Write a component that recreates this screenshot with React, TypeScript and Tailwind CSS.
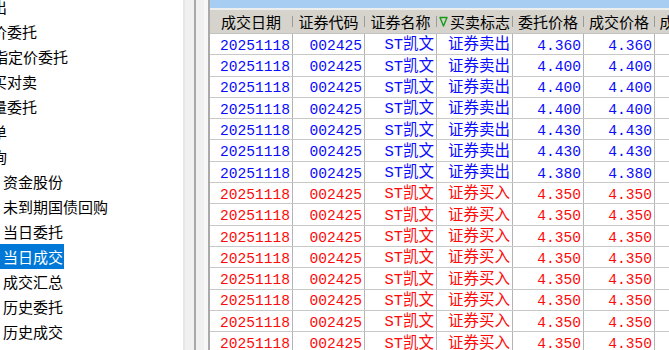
import React from 'react';

type Trade = { price: string; side: 'sell' | 'buy' };

const trades: Trade[] = [
    { price: '4.360', side: 'sell' },
    { price: '4.400', side: 'sell' },
    { price: '4.400', side: 'sell' },
    { price: '4.400', side: 'sell' },
    { price: '4.430', side: 'sell' },
    { price: '4.430', side: 'sell' },
    { price: '4.380', side: 'sell' },
    ...Array.from({ length: 9 }, () => ({ price: '4.350', side: 'buy' as const })),
];

// top-level items are scrolled off to the left, only their tails show
const menuTop: { label: string; cls: string }[] = [
    { label: '卖出', cls: 'ml-[-23px]' },
    { label: '市价委托', cls: 'ml-[-23px]' },
    { label: '指定价委托', cls: 'ml-[-7px]' },
    { label: '对买对卖', cls: 'ml-[-23px]' },
    { label: '批量委托', cls: 'ml-[-23px]' },
    { label: '撤单', cls: 'ml-[-23px]' },
    { label: '查询', cls: 'ml-[-23px]' },
];

const queryItems = ['资金股份', '未到期国债回购', '当日委托', '当日成交', '成交汇总', '历史委托', '历史成交', '资金流水'];

const columns = [
    { title: '成交日期', w: 'w-[83px]' },
    { title: '证券代码', w: 'w-[72px]' },
    { title: '证券名称', w: 'w-[72px]' },
    { title: '买卖标志', w: 'w-[76px]', sorted: true },
    { title: '委托价格', w: 'w-[71px]' },
    { title: '成交价格', w: 'w-[71px]' },
    { title: '成交数量', w: 'w-[70px]' },
];

const SortMark = () => (
    <svg width="9" height="11" viewBox="0 0 9 11" className="mr-[2px] shrink-0">
        <path d="M1 1.5 H8 L4.5 10 Z" fill="none" stroke="#1a9a1a" strokeWidth="1.4" strokeLinejoin="round" />
    </svg>
);

const Sidebar: React.FC = () => (
    <div className="w-[183px] shrink-0 bg-white overflow-hidden font-['Noto_Sans_CJK_SC',sans-serif] text-[15px] text-black">
        <div className="mt-[-6.5px]">
            {menuTop.map((m) => (
                <div key={m.label} className="h-[25px] leading-[25px] whitespace-nowrap">
                    <span className={`inline-block ${m.cls}`}>{m.label}</span>
                </div>
            ))}
            {queryItems.map((label) => {
                const active = label === '当日成交';
                return (
                    <div key={label} className="h-[25px] whitespace-nowrap">
                        <span
                            className={`inline-block h-[25px] leading-[25px] pl-[3px] pr-[1px] ${active ? 'bg-[#0078d7] text-white' : ''}`}
                        >
                            {label}
                        </span>
                    </div>
                );
            })}
        </div>
    </div>
);

const Splitter: React.FC = () => (
    <div className="flex shrink-0 h-full">
        <div className="w-[2px] bg-[#e6e6e6]" />
        <div className="w-[9px] bg-[#f0f0f0]" />
        <div className="w-[2px] bg-[#a9a9a9]" />
        <div className="w-[8px] bg-[#f0f0f0]" />
        <div className="w-[4px] bg-[#f7f7f7]" />
        <div className="w-[2px] bg-[#a9a9a9]" />
    </div>
);

const TradeGrid: React.FC = () => (
    <div className="flex-1 min-w-0 overflow-hidden bg-white">
        <div className="h-[8px] bg-[#a8cdf2]" />
        <div className="h-[2px] bg-[#eeeeee]" />
        <div className="flex h-[23px] bg-[#d6d3cc] font-['Noto_Sans_CJK_SC',sans-serif] text-[15px] text-black">
            {columns.map((c) => (
                <div key={c.title} className={`${c.w} shrink-0 flex items-center`}>
                    <div className="flex-1 flex items-center justify-center leading-none whitespace-nowrap">
                        {c.sorted && <SortMark />}
                        {c.title}
                    </div>
                    <div className="w-[1px] h-[11px] bg-[#9a9a9a]" />
                </div>
            ))}
        </div>
        <div className="border-t border-[#c2c2c2]">
            {trades.map((t, i) => {
                const color = t.side === 'sell' ? 'text-[#0a0aff]' : 'text-[#ff0a0a]';
                const cell = 'shrink-0 h-full flex items-center justify-end pr-[2px] pt-[4px] border-r border-[#b4b4b4] whitespace-nowrap';
                return (
                    <div
                        key={i}
                        className={`flex h-[21.3px] border-b border-[#c8c8c8] font-['Liberation_Mono','Noto_Sans_CJK_SC',monospace] leading-none ${color}`}
                    >
                        <div className={`${cell} w-[83px] text-[14.6px]`}>20251118</div>
                        <div className={`${cell} w-[72px] text-[14.6px]`}>002425</div>
                        <div className={`${cell} w-[72px] text-[15.5px]`}>ST凯文</div>
                        <div className={`${cell} w-[76px] text-[15.5px]`}>{t.side === 'sell' ? '证券卖出' : '证券买入'}</div>
                        <div className={`${cell} w-[71px] text-[14.6px]`}>{t.price}</div>
                        <div className={`${cell} w-[71px] text-[14.6px]`}>{t.price}</div>
                        <div className={`${cell} w-[70px] text-[14.6px]`}>800</div>
                    </div>
                );
            })}
        </div>
    </div>
);

export default function App() {
    return (
        <div className="w-[669px] h-[350px] overflow-hidden flex bg-white">
            <Sidebar />
            <Splitter />
            <TradeGrid />
        </div>
    );
}
